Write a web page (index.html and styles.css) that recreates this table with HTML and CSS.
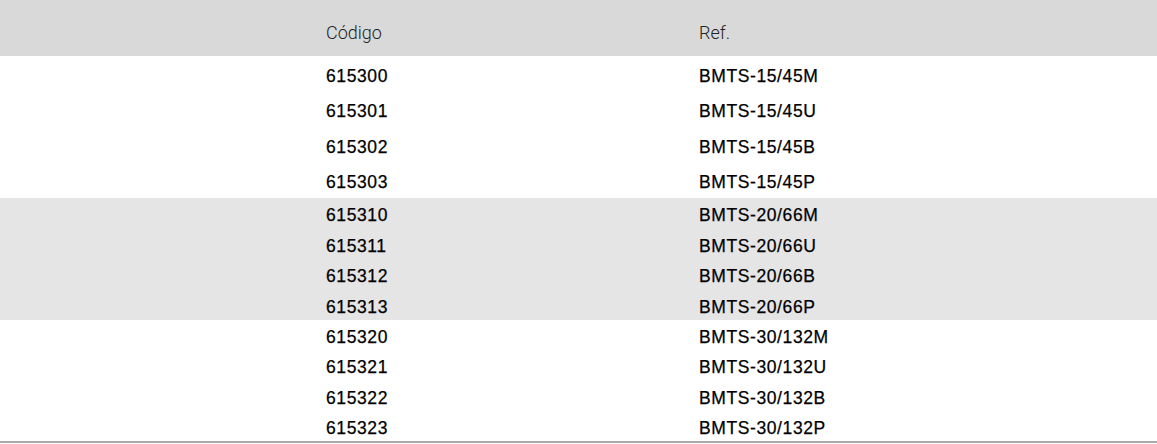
FILE: index.html
```html
<!DOCTYPE html>
<html lang="es">
<head>
<meta charset="utf-8">
<link rel="stylesheet" href="styles.css">
</head>
<body>
<div class="table">
  <div class="head">
    <div class="c1">Código</div>
    <div class="c2">Ref.</div>
  </div>
  <div class="group g-tall">
    <div class="row"><div class="c1">615300</div><div class="c2">BMTS-15/45M</div></div>
    <div class="row"><div class="c1">615301</div><div class="c2">BMTS-15/45U</div></div>
    <div class="row"><div class="c1">615302</div><div class="c2">BMTS-15/45B</div></div>
    <div class="row"><div class="c1">615303</div><div class="c2">BMTS-15/45P</div></div>
  </div>
  <div class="group g-shaded">
    <div class="row"><div class="c1">615310</div><div class="c2">BMTS-20/66M</div></div>
    <div class="row"><div class="c1">615311</div><div class="c2">BMTS-20/66U</div></div>
    <div class="row"><div class="c1">615312</div><div class="c2">BMTS-20/66B</div></div>
    <div class="row"><div class="c1">615313</div><div class="c2">BMTS-20/66P</div></div>
  </div>
  <div class="group g-last">
    <div class="row"><div class="c1">615320</div><div class="c2">BMTS-30/132M</div></div>
    <div class="row"><div class="c1">615321</div><div class="c2">BMTS-30/132U</div></div>
    <div class="row"><div class="c1">615322</div><div class="c2">BMTS-30/132B</div></div>
    <div class="row"><div class="c1">615323</div><div class="c2">BMTS-30/132P</div></div>
  </div>
</div>
</body>
</html>
```
FILE: styles.css
```css
html, body {
  margin: 0;
  padding: 0;
  background: #ffffff;
}
body {
  font-family: "Liberation Sans", Arial, Helvetica, sans-serif;
  color: #000000;
}
.table {
  width: 1157px;
  display: flex;
  flex-direction: column;
}
.head {
  display: grid;
  grid-template-columns: 326px 373px 1fr;
  height: 56px;
  background: #d9d9d9;
  align-items: center;
  padding-top: 8px;
  box-sizing: border-box;
  font-family: Roboto, "Liberation Sans", sans-serif;
  font-weight: 300;
  font-size: 18px;
  color: #222222;
}
.head .c1 { grid-column: 2; }
.head .c2 { grid-column: 3; }
.row {
  display: grid;
  grid-template-columns: 326px 373px 1fr;
  align-items: center;
  font-size: 17.5px;
  letter-spacing: 0.6px;
  -webkit-text-stroke: 0.25px #000000;
  box-sizing: border-box;
  padding-top: 5px;
}
.row .c1 { grid-column: 2; }
.row .c2 { grid-column: 3; }
.g-tall .row { height: 35.5px; }
.g-shaded { background: #e5e5e5; }
.g-shaded .row { height: 30.5px; }
.g-last .row { height: 30.25px; }
.g-last { border-bottom: 2px solid #aaaaaa; }
```
